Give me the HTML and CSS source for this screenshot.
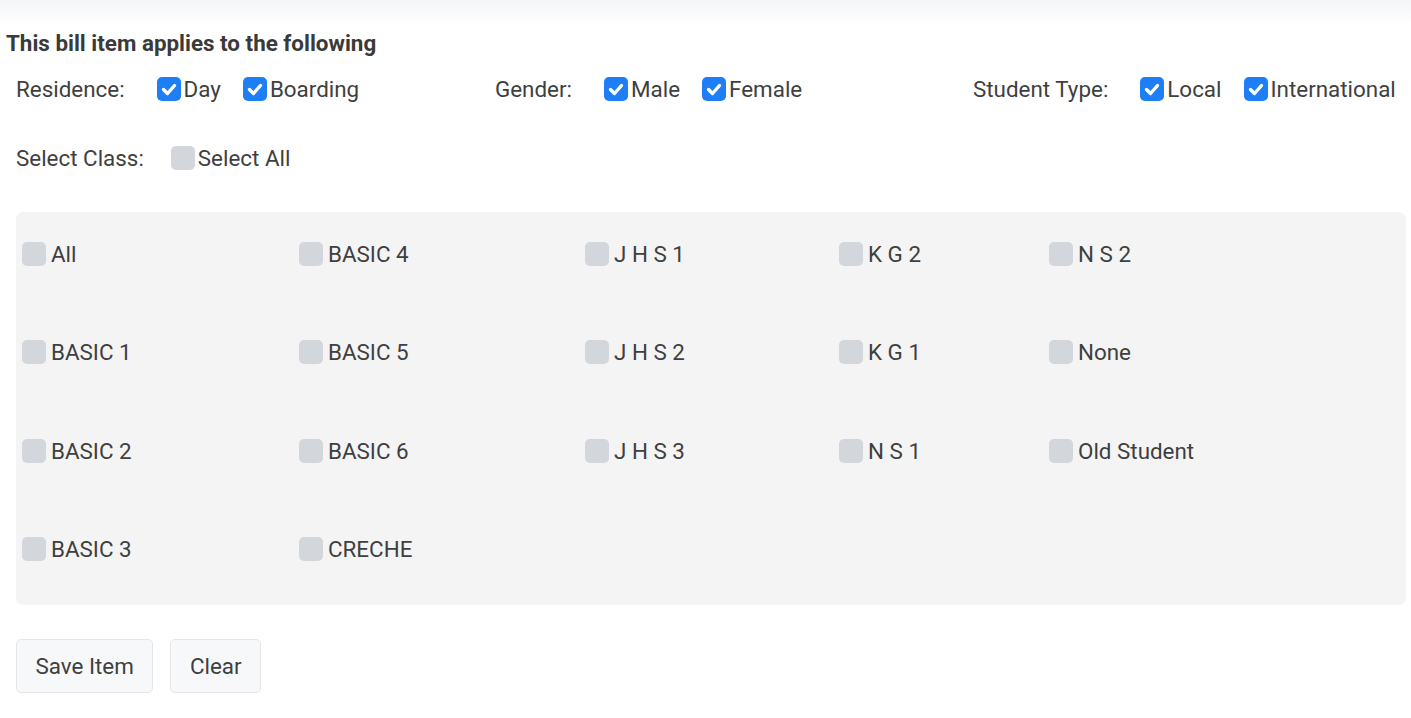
FILE: index.html
```html
<!DOCTYPE html>
<html>
<head>
<meta charset="utf-8">
<link rel="stylesheet" href="styles.css">
</head>
<body>
<div class="topshade"></div>
<main class="page">
  <h3 class="title">This bill item applies to the following</h3>
  <div class="filters">
    <div class="group">
      <span class="label">Residence:</span>
      <label class="check"><span class="box on"><svg viewBox="0 0 24 24"><path d="M6.5 12.5 L10.5 16.5 L17.5 8.5"/></svg></span>Day</label>
      <label class="check"><span class="box on"><svg viewBox="0 0 24 24"><path d="M6.5 12.5 L10.5 16.5 L17.5 8.5"/></svg></span>Boarding</label>
    </div>
    <div class="group">
      <span class="label">Gender:</span>
      <label class="check"><span class="box on"><svg viewBox="0 0 24 24"><path d="M6.5 12.5 L10.5 16.5 L17.5 8.5"/></svg></span>Male</label>
      <label class="check"><span class="box on"><svg viewBox="0 0 24 24"><path d="M6.5 12.5 L10.5 16.5 L17.5 8.5"/></svg></span>Female</label>
    </div>
    <div class="group">
      <span class="label">Student Type:</span>
      <label class="check"><span class="box on"><svg viewBox="0 0 24 24"><path d="M6.5 12.5 L10.5 16.5 L17.5 8.5"/></svg></span>Local</label>
      <label class="check"><span class="box on"><svg viewBox="0 0 24 24"><path d="M6.5 12.5 L10.5 16.5 L17.5 8.5"/></svg></span>International</label>
    </div>
  </div>
  <div class="selectrow">
    <span class="label sel">Select Class:</span>
    <label class="check"><span class="box"></span>Select All</label>
  </div>
  <div class="classes">
    <label class="check"><span class="box"></span>All</label>
    <label class="check"><span class="box"></span>BASIC 1</label>
    <label class="check"><span class="box"></span>BASIC 2</label>
    <label class="check"><span class="box"></span>BASIC 3</label>
    <label class="check"><span class="box"></span>BASIC 4</label>
    <label class="check"><span class="box"></span>BASIC 5</label>
    <label class="check"><span class="box"></span>BASIC 6</label>
    <label class="check"><span class="box"></span>CRECHE</label>
    <label class="check"><span class="box"></span>J H S 1</label>
    <label class="check"><span class="box"></span>J H S 2</label>
    <label class="check"><span class="box"></span>J H S 3</label>
    <span></span>
    <label class="check"><span class="box"></span>K G 2</label>
    <label class="check"><span class="box"></span>K G 1</label>
    <label class="check"><span class="box"></span>N S 1</label>
    <span></span>
    <label class="check"><span class="box"></span>N S 2</label>
    <label class="check"><span class="box"></span>None</label>
    <label class="check"><span class="box"></span>Old Student</label>
  </div>
  <div class="actions">
    <button class="btn">Save Item</button>
    <button class="btn">Clear</button>
  </div>
</main>
</body>
</html>
```

FILE: styles.css
```css
html, body {
  margin: 0;
  padding: 0;
  background: #ffffff;
}
body {
  font-family: Roboto, "Noto Sans", sans-serif;
  color: #3f3f3f;
  position: relative;
  min-height: 718px;
}
.topshade {
  position: absolute;
  left: 0;
  right: 0;
  top: 0;
  height: 24px;
  background: linear-gradient(#f4f5f7, #ffffff);
}
.page {
  position: relative;
  padding: 31px 5px 0 16px;
}
.title {
  margin: 0 0 0 -10px;
  font-size: 22.4px;
  font-weight: 700;
  line-height: 24px;
  color: #3a3a3a;
  white-space: nowrap;
}
.filters {
  display: grid;
  grid-template-columns: 479px 478px 1fr;
  margin-top: 21px;
  height: 26px;
  align-items: center;
}
.group {
  display: flex;
  align-items: center;
  white-space: nowrap;
  min-width: 0;
}
.label {
  font-size: 22.4px;
  margin-right: 32px;
  white-space: nowrap;
  flex: none;
}
.label.sel { margin-right: 27px; }
.check {
  display: inline-flex;
  align-items: center;
  font-size: 22.4px;
  line-height: 24px;
  margin-right: 22px;
  white-space: nowrap;
  flex: none;
}
.box {
  width: 24px;
  height: 24px;
  border-radius: 5px;
  background: #d3d6da;
  margin-right: 3px;
  flex: none;
  display: block;
}
.box.on {
  background: #1e7ef6;
}
.box svg {
  display: block;
  width: 24px;
  height: 24px;
  fill: none;
  stroke: #ffffff;
  stroke-width: 3.4;
  stroke-linecap: round;
  stroke-linejoin: round;
}
.selectrow {
  display: flex;
  align-items: center;
  margin-top: 44px;
  height: 24px;
}
.classes {
  margin-top: 42px;
  background: #f4f4f4;
  border-radius: 7px;
  padding: 30px 6px 44px;
  display: grid;
  grid-auto-flow: column;
  grid-template-rows: repeat(4, 24px);
  row-gap: 74.4px;
  grid-template-columns: 277px 286px 254px 210px 1fr;
}
.classes .box { margin-right: 5px; }
.actions {
  display: flex;
  gap: 17px;
  margin-top: 34px;
}
.btn {
  font-family: Roboto, "Noto Sans", sans-serif;
  font-size: 22.4px;
  color: #3f3f3f;
  background: #f7f8fa;
  border: 1px solid #e4e6e9;
  border-radius: 5px;
  height: 54px;
  padding: 0 18.5px;
}
```
